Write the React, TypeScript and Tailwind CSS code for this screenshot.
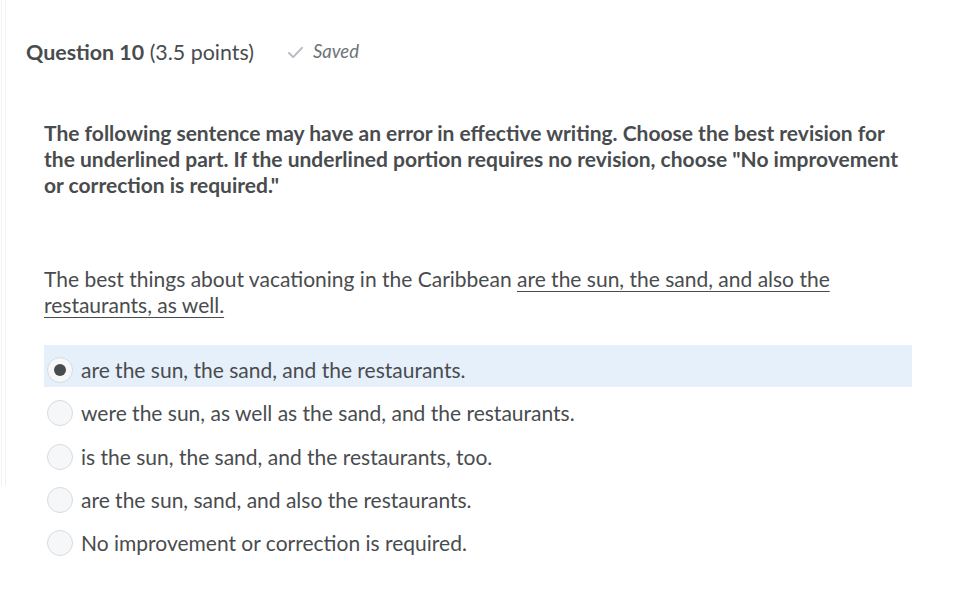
const options = [
  'are the sun, the sand, and the restaurants.',
  'were the sun, as well as the sand, and the restaurants.',
  'is the sun, the sand, and the restaurants, too.',
  'are the sun, sand, and also the restaurants.',
  'No improvement or correction is required.',
]

function Radio({ checked }: { checked: boolean }) {
  return (
    <span className="flex h-[26px] w-[26px] shrink-0 items-center justify-center rounded-full border border-[#d6dbe2] bg-[#f6f7f8]">
      {checked && <span className="h-[12px] w-[12px] rounded-full bg-[#494c4e]" />}
    </span>
  )
}

export default function App() {
  return (
    <div
      className="relative h-[597px] w-[958px] bg-white text-[#494c4e]"
      style={{ fontFamily: 'Lato, "Open Sans", sans-serif' }}
    >
      <div className="absolute left-[1px] top-0 h-[486px] w-[5px] border-x border-[#f2f2f2]" />
      <div className="flex items-center pl-[26px] pt-[38px]">
        <h2 className="text-[21.4px] leading-[28px]">
          <span className="font-bold">Question 10</span> (3.5 points)
        </h2>
        <span className="ml-[33px] flex items-center gap-[9px] text-[18.5px] italic text-[#6e7376]">
          <svg width="17" height="13" viewBox="0 0 18 14" fill="none">
            <path d="M2 7.5 L6.5 12 L16 2" stroke="#b8bcc2" strokeWidth="2.2" strokeLinecap="round" strokeLinejoin="round" />
          </svg>
          Saved
        </span>
      </div>

      <div className="pl-[44px] pr-[40px]">
        <p className="mt-[54px] text-[21px] font-bold leading-[26px]">
          The following sentence may have an error in effective writing. Choose the best revision for the underlined part. If the underlined portion requires no revision, choose "No improvement or correction is required."
        </p>

        <p className="mt-[68px] text-[21px] leading-[26px]">
          The best things about vacationing in the Caribbean{' '}
          <span className="underline decoration-1 underline-offset-[4px]">
            are the sun, the sand, and also the restaurants, as well.
          </span>
        </p>

        <ul className="mt-[27px] flex w-[868px] flex-col gap-[1.3px]">
          {options.map((o, i) => (
            <li
              key={o}
              className={`flex h-[42px] items-start pl-[3px] pt-[12px] text-[21px] ${i === 0 ? 'bg-[#e6f0fb]' : ''}`}
            >
              <span className="flex h-[26px] items-center gap-[8px]">
                <Radio checked={i === 0} />
                <span className="leading-[26px]">{o}</span>
              </span>
            </li>
          ))}
        </ul>
      </div>
    </div>
  )
}
